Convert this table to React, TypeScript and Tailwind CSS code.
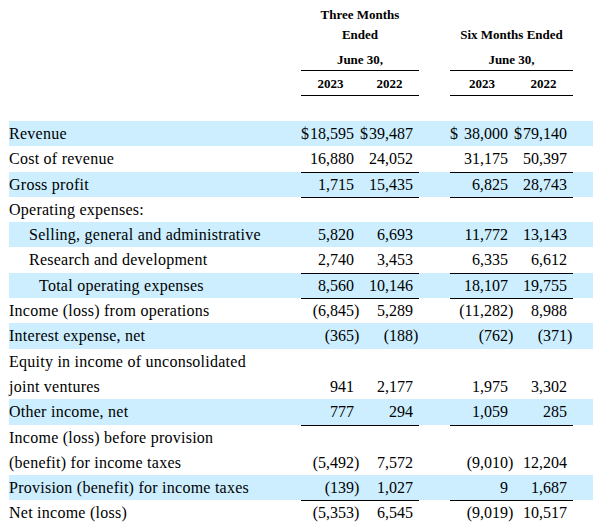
import React from 'react'

type Row = {
    label: React.ReactNode
    indent?: number
    vals: string[]
    band?: boolean
    line?: boolean
    two?: boolean
}

const rows: Row[] = [
    { label: 'Revenue', vals: ['$18,595', '$39,487', '$ 38,000', '$79,140'], band: true },
    { label: 'Cost of revenue', vals: ['16,880', '24,052', '31,175', '50,397'], line: true },
    { label: 'Gross profit', vals: ['1,715', '15,435', '6,825', '28,743'], band: true, line: true },
    { label: 'Operating expenses:', vals: ['', '', '', ''] },
    { label: 'Selling, general and administrative', indent: 1, vals: ['5,820', '6,693', '11,772', '13,143'], band: true },
    { label: 'Research and development', indent: 1, vals: ['2,740', '3,453', '6,335', '6,612'], line: true },
    { label: 'Total operating expenses', indent: 2, vals: ['8,560', '10,146', '18,107', '19,755'], band: true, line: true },
    { label: 'Income (loss) from operations', vals: ['(6,845)', '5,289', '(11,282)', '8,988'] },
    { label: 'Interest expense, net', vals: ['(365)', '(188)', '(762)', '(371)'], band: true },
    { label: <>Equity in income of unconsolidated<br />joint ventures</>, vals: ['941', '2,177', '1,975', '3,302'], two: true },
    { label: 'Other income, net', vals: ['777', '294', '1,059', '285'], band: true, line: true },
    { label: <>Income (loss) before provision<br />(benefit) for income taxes</>, vals: ['(5,492)', '7,572', '(9,010)', '12,204'], two: true },
    { label: 'Provision (benefit) for income taxes', vals: ['(139)', '1,027', '9', '1,687'], band: true, line: true },
    { label: 'Net income (loss)', vals: ['(5,353)', '6,545', '(9,019)', '10,517'], line: true },
]

const grid = 'grid grid-cols-[292px_53px_6px_53px_6px_31px_58px_6px_53px_6px_20px]'

const Value = ({ v, line, two }: { v: string; line?: boolean; two?: boolean }) => {
    const dollar = v.startsWith('$')
    const neg = v.includes('(')
    const num = v.replace('$', '').replace(')', '').trim()
    const b = line ? 'border-b border-black' : ''
    const al = two ? 'items-end' : 'items-start'
    return (
        <>
            <div className={`flex justify-between ${al} ${b}`}>
                <span>{dollar ? '$' : ''}</span>
                <span>{num}</span>
            </div>
            <div className={`flex ${al} ${b}`}>{neg ? ')' : ''}</div>
        </>
    )
}

const DataRow = ({ r }: { r: Row }) => {
    const pad = r.indent === 2 ? 'pl-[30px]' : r.indent === 1 ? 'pl-[20px]' : ''
    return (
        <div className={`${grid} ${r.two ? 'h-[50.6px]' : 'h-[25.3px]'} ${r.band ? 'bg-[#cceeff]' : ''}`}>
            <div className={`${pad} tracking-[0.25px]`}>{r.label}</div>
            <Value v={r.vals[0]} line={r.line} two={r.two} />
            <Value v={r.vals[1]} line={r.line} two={r.two} />
            <div></div>
            <Value v={r.vals[2]} line={r.line} two={r.two} />
            <Value v={r.vals[3]} line={r.line} two={r.two} />
            <div></div>
        </div>
    )
}

export default function App() {
    return (
        <div className="w-[593px] h-[522px] overflow-hidden bg-white pl-[9px] text-black text-[16px] leading-[25.3px]" style={{ fontFamily: '"Liberation Serif", "Times New Roman", serif' }}>
            <div className="text-[13px] font-bold leading-[20px]">
                <div className={`${grid} pt-[5px]`}>
                    <div></div>
                    <div className="col-span-4 text-center">Three Months<br />Ended</div>
                    <div></div>
                    <div className="col-span-4 text-center self-end">Six Months Ended</div>
                    <div></div>
                </div>
                <div className={`${grid} h-[26px]`}>
                    <div></div>
                    <div className="col-span-4 flex items-end justify-center border-b border-black">June 30,</div>
                    <div></div>
                    <div className="col-span-4 flex items-end justify-center border-b border-black">June 30,</div>
                    <div></div>
                </div>
                <div className={`${grid} h-[25px]`}>
                    <div></div>
                    <div className="col-span-2 flex items-end justify-center pb-[1px] border-b border-black">2023</div>
                    <div className="col-span-2 flex items-end justify-center pb-[1px] border-b border-black">2022</div>
                    <div></div>
                    <div className="col-span-2 flex items-end justify-center pb-[1px] border-b border-black">2023</div>
                    <div className="col-span-2 flex items-end justify-center pb-[1px] border-b border-black">2022</div>
                    <div></div>
                </div>
                <div className="h-[25px]"></div>
            </div>
            {rows.map((r, i) => (
                <DataRow key={i} r={r} />
            ))}
        </div>
    )
}
